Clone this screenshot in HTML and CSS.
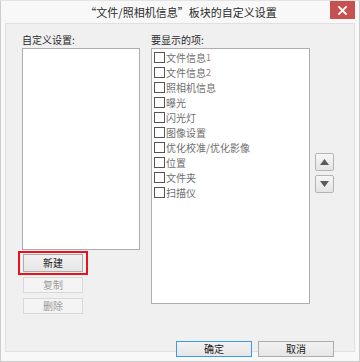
FILE: index.html
```html
<!DOCTYPE html>
<html lang="zh-CN">
<head>
<meta charset="utf-8">
<title>自定义设置</title>
<link rel="stylesheet" href="styles.css">
</head>
<body>
<div class="window">
  <div class="titlebar">
    <div class="title">“文件/照相机信息”板块的自定义设置</div>
    <div class="close">
      <svg width="9" height="9" viewBox="0 0 9 9"><path d="M1 1L8 8M8 1L1 8" stroke="#fff" stroke-width="1.8" stroke-linecap="square"/></svg>
    </div>
  </div>
  <div class="panel">
    <div class="main">
      <div class="col-left">
        <div class="label">自定义设置:</div>
        <div class="listbox left-box"></div>
        <div class="highlight"><button class="btn btn-new">新建</button></div>
        <button class="btn btn-small disabled copy">复制</button>
        <button class="btn btn-small disabled del">删除</button>
      </div>
      <div class="col-right">
        <div class="label">要显示的项:</div>
        <div class="listbox right-box">
          <div class="item"><span class="cb"></span>文件信息<span class="num">1</span></div>
          <div class="item"><span class="cb"></span>文件信息<span class="num">2</span></div>
          <div class="item"><span class="cb"></span>照相机信息</div>
          <div class="item"><span class="cb"></span>曝光</div>
          <div class="item"><span class="cb"></span>闪光灯</div>
          <div class="item"><span class="cb"></span>图像设置</div>
          <div class="item"><span class="cb"></span>优化校准/优化影像</div>
          <div class="item"><span class="cb"></span>位置</div>
          <div class="item"><span class="cb"></span>文件夹</div>
          <div class="item"><span class="cb"></span>扫描仪</div>
        </div>
      </div>
      <div class="col-arrows">
        <button class="arrow up"><svg width="9" height="6" viewBox="0 0 9 6"><path d="M4.5 0L9 6H0Z" fill="#5a5a5a"/></svg></button>
        <button class="arrow down"><svg width="9" height="6" viewBox="0 0 9 6"><path d="M0 0H9L4.5 6Z" fill="#5a5a5a"/></svg></button>
      </div>
    </div>
    <div class="footer">
      <button class="btn btn-foot ok">确定</button>
      <button class="btn btn-foot cancel">取消</button>
    </div>
  </div>
</div>
</body>
</html>
```

FILE: styles.css
```css
* { box-sizing: border-box; }
html, body {
  margin: 0;
  padding: 0;
  background: #f7f7f7;
}
body {
  font-family: "Noto Sans CJK SC", "Microsoft YaHei", sans-serif;
  font-size: 10px;
  color: #333;
}
.window {
  width: 360px;
  height: 362px;
  border: 1px solid #cdcdcd;
  border-top-color: #e4e4e4;
  background: #f8f8f8;
  display: flex;
  flex-direction: column;
}
.titlebar {
  height: 22px;
  display: flex;
  align-items: center;
  justify-content: center;
  position: relative;
}
.title {
  font-size: 11px;
  color: #2b2b2b;
  line-height: 14px;
  margin-top: -1px;
  margin-left: 2px;
}
.close {
  position: absolute;
  top: 0;
  right: 4px;
  width: 25px;
  height: 18px;
  background: #c75050;
  display: flex;
  align-items: center;
  justify-content: center;
}
.panel {
  margin: 0 4px 0 4px;
  height: 329px;
  border: 1px solid #e0e0e0;
  background: #f0f0f0;
  padding: 9px 20px 4px 16px;
  display: flex;
  flex-direction: column;
}
.main {
  display: flex;
}
.label {
  line-height: 14px;
  height: 14px;
  margin-bottom: 1px;
  color: #2a2a2a;
}
.col-left {
  width: 118px;
  display: flex;
  flex-direction: column;
  align-items: flex-start;
}
.listbox {
  background: #fff;
  border: 1px solid #acadb3;
}
.left-box {
  width: 118px;
  height: 202px;
}
.highlight {
  margin-top: 1px;
  margin-left: -4px;
  border: 2px solid #e8121b;
  padding: 1px 3px;
}
.btn {
  font-family: inherit;
  font-size: 10px;
  padding: 0;
  margin: 0;
  border: 1px solid #acacac;
  background: linear-gradient(#f2f2f2, #e6e6e6);
  color: #1a1a1a;
  line-height: 14px;
}
.btn-new {
  display: block;
  width: 60px;
  height: 18px;
}
.btn-small {
  width: 60px;
  height: 16px;
  margin-left: 1px;
}
.copy { margin-top: 2px; }
.del { margin-top: 5px; }
.disabled {
  border-color: #d9d9d9;
  background: #f4f4f4;
  color: #9b9b9b;
}
.col-right {
  width: 161px;
  margin-left: 11px;
}
.right-box {
  height: 256px;
  padding: 1px 0 0 2px;
}
.item {
  height: 15px;
  line-height: 15px;
  display: flex;
  align-items: center;
  color: #6e6e6e;
}
.cb {
  width: 11px;
  height: 11px;
  border: 1px solid #555;
  background: #fff;
  margin-right: 1px;
  flex: none;
}
.num {
  color: #a08060;
  font-size: 9px;
}
.col-arrows {
  margin-left: 5px;
  padding-top: 120px;
  display: flex;
  flex-direction: column;
  gap: 4px;
}
.arrow {
  width: 19px;
  height: 18px;
  padding: 0;
  border: 1px solid #b4b4b4;
  border-radius: 2px;
  background: linear-gradient(#f6f6f6, #e4e4e4);
  display: flex;
  align-items: center;
  justify-content: center;
}
.footer {
  margin-top: 27px;
  display: flex;
  justify-content: flex-end;
  gap: 6px;
}
.btn-foot {
  width: 76px;
  height: 16px;
}
.ok {
  border-color: #3c9be8;
}
```
